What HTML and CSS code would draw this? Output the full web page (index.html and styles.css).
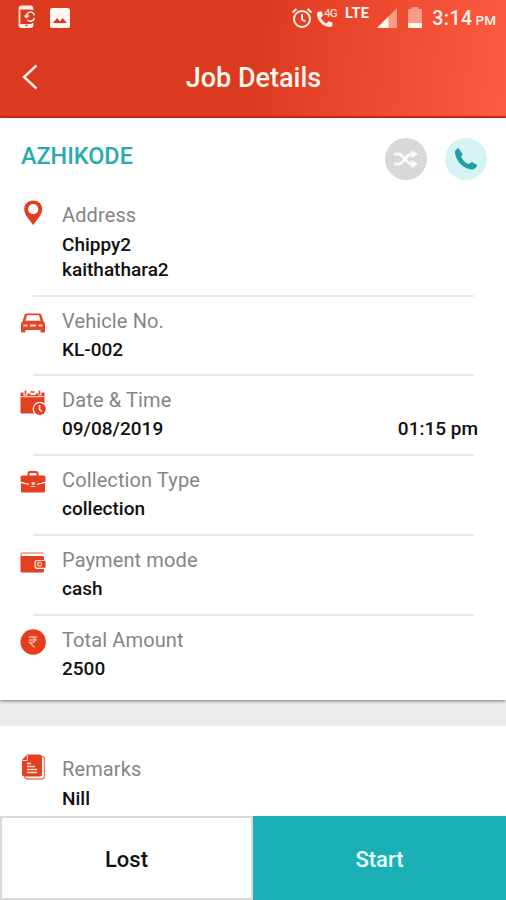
FILE: index.html
```html
<!DOCTYPE html>
<html lang="en">
<head>
<meta charset="utf-8">
<title>Job Details</title>
<link rel="stylesheet" href="styles.css">
</head>
<body>
<div class="screen">
  <header class="header">
    <div class="status">
      <svg class="status-phone" width="18" height="24" viewBox="0 0 18 24"><path d="M14.500 5V3.500Q14.500 1.500 12.500 1.500H3.500Q1.500 1.500 1.500 3.500V20Q1.500 22 3.500 22H12.500Q14.500 22 14.500 20V18" fill="none" stroke="#fff0ea" stroke-width="1.800"/><path d="M2 2h12v2.500H2zM2 19h12v3H2z" fill="#fff0ea"/><path d="M7 20.300h3" stroke="#dc3a1e" stroke-width="1"/><path d="M8.500 11a4 4 0 0 1 7-2.500l1 2M16.500 13a4.200 4.200 0 0 1-7 2M6.500 10.500l2 2 2.500-2" fill="none" stroke="#fff0ea" stroke-width="1.500"/></svg>
      <svg class="status-image" width="20" height="20" viewBox="0 0 20 20"><rect width="20" height="20" rx="2.500" fill="#fff8f3"/><path d="M3 15l4-5 3 3.500 2.500-3.500 4.500 5z" fill="#dc3a1e"/></svg>
      <div class="status-right">
        <svg class="alarm" width="22" height="22" viewBox="0 0 22 22" fill="none" stroke="#fff0ea" stroke-width="2"><circle cx="11" cy="12" r="8"/><path d="M11 7v5.500l3.500 2M1.500 5.500l4-3.500M20.500 5.500l-4-3.500"/></svg>
        <div class="volte"><svg width="18" height="18" viewBox="0 0 18 18"><path d="M3.500 1.500C2 1.500 1 2.300 1 3.500 1 11 7 17 14.500 17c1.200 0 2-.8 2-2v-2.400l-4-1.300-2.300 2.100C7.800 12.200 6 10.200 4.800 8l2.100-2.300L5.900 1.500z" fill="#fff0ea"/></svg><span>4G</span></div>
        <span class="lte">LTE</span>
        <svg class="signal" width="20" height="20" viewBox="0 0 20 20"><path d="M0 20L20 0v20z" fill="#ff9d89"/><path d="M0 20L11.500 8.500V20z" fill="#fff5ed"/></svg>
        <svg class="battery" width="14" height="21" viewBox="0 0 14 21"><path d="M0 3Q0 2 1 2h2.500V0h7v2H13q1 0 1 1v13H0z" fill="#f99a88"/><path d="M0 16h14v4q0 1-1 1H1q-1 0-1-1z" fill="#fff5ed"/></svg>
        <span class="clock">3:14</span><span class="pm">PM</span>
      </div>
    </div>
    <div class="titlebar">
      <svg class="back" width="17" height="26" viewBox="0 0 17 26"><path d="M14.500 1.500L2 13l12.500 11.500" fill="none" stroke="#fff0e8" stroke-width="2.400"/></svg>
      <h1>Job Details</h1>
    </div>
  </header>

  <main class="card">
    <div class="card-head">
      <h2>AZHIKODE</h2>
      <div class="round gray"><svg width="26" height="18" viewBox="0 0 26 18"><path d="M1 4h4c6 0 8 10 14 10h2M1 14h4c6 0 8-10 14-10h2" fill="none" stroke="#fafafa" stroke-width="2.800"/><path d="M18.500-.2l6.500 4.200-6.500 4.200zM18.500 9.800l6.500 4.200-6.500 4.200z" fill="#fafafa"/></svg></div>
      <div class="round aqua"><svg width="24" height="22" viewBox="0 0 24 22"><path d="M4.500 0C2 1 .5 3 1 5.500 2.500 14 10 21 18 21.500c2.500 0 4.500-2 5.200-4.500L18 14l-3.500 2C11.500 15 8.500 12 7.200 9L8.500 6z" fill="#219fa8"/></svg></div>
    </div>

    <section class="row address">
      <svg class="icon" viewBox="0 0 26 26"><path d="M13.200.5C8 .5 4.200 4.300 4.200 9.300c0 5.700 5.800 10.700 9 15.900 3.200-5.200 9-10.200 9-15.900 0-5-3.800-8.800-9-8.800zm0 3.600a5.100 5.100 0 1 1 0 10.200 5.100 5.100 0 0 1 0-10.200z" fill="#e33e1c" fill-rule="evenodd"/></svg>
      <div class="label">Address</div>
      <div class="value">Chippy2<br>kaithathara2</div>
    </section>
    <section class="row">
      <svg class="icon" viewBox="0 0 26 26"><path d="M6.500 3.500h13q1.500 0 2 1.500l2 6.500Q25 12.500 25 14v7.500q0 1-1 1h-2.500q-1 0-1-1V20h-15v1.500q0 1-1 1H2q-1 0-1-1V14q0-1.500 1.500-2.500l2-6.500q.5-1.500 2-1.500zM7 5.300L5.400 10.800h15.200L19 5.300z" fill="#e2472b" fill-rule="evenodd"/><path d="M3.500 15.500h4M10 15.500h6M18.500 15.500h4" stroke="#ffd5cc" stroke-width="2"/></svg>
      <div class="label">Vehicle No.</div>
      <div class="value">KL-002</div>
    </section>
    <section class="row date">
      <svg class="icon" viewBox="0 0 26 26"><path d="M.5 2.500h3v3h4v-2h3v1.500h5V3.500h3v2h3v-3h3V12H.5zM.5 8h24v14q0 1.500-1.500 1.500H2Q.5 23.500.5 22z" fill="#e33f21"/><path d="M5.500.5v4M10.500 2h4M19.500.5v4" stroke="#e33f21" stroke-width="1.700"/><path d="M1 6.700h23" stroke="#ffe7df"/><circle cx="19.800" cy="19" r="7.200" fill="#fff"/><circle cx="19.800" cy="19" r="6" fill="#e33f21"/><path d="M19.500 15v4.500l2.500 2" fill="none" stroke="#ffe7df" stroke-width="1.600"/></svg>
      <div class="label">Date &amp; Time</div>
      <div class="value split"><span>09/08/2019</span><span>01:15 pm</span></div>
    </section>
    <section class="row">
      <svg class="icon" viewBox="0 0 26 26"><path d="M8.500 7V4.500q0-1.500 1.500-1.500h6q1.500 0 1.500 1.500V7" fill="none" stroke="#e33f21" stroke-width="2"/><path d="M2.500 6.500h21q2 0 2 2v4q-5 2-9 2.300V13h-7v1.800q-4-.3-9-2.300v-4q0-2 2-2zM1 14q5 1.700 8.500 1.900.5 1.800 2 1.800h3q1.500 0 2-1.800 3.500-.2 8.500-1.900v8.300q0 1.200-1.200 1.200H2.200Q1 23.500 1 22.300z" fill="#e33f21"/><rect x="9" y="12" width="8" height="5" fill="#e33f21"/><rect x="11.500" y="13.300" width="3.500" height="2.400" rx="1" fill="#ffe0d8"/></svg>
      <div class="label">Collection Type</div>
      <div class="value">collection</div>
    </section>
    <section class="row">
      <svg class="icon" viewBox="0 0 26 26"><path d="M23 5.500V4H3Q1 4 1 6" fill="none" stroke="#ee9a85" stroke-width="1.500"/><path d="M.5 5.500Q1 7 3 7h19.500q1.500 0 1.500 1.500V11h-7q-2.500 0-2.500 2.500v4q0 2.500 2.500 2.500h7v2q0 1.500-1.500 1.500H2q-1.500 0-1.500-1.500z" fill="#e33f21"/><path d="M17.500 11.800h8v6.900h-8q-2 0-2-2v-2.900q0-2 2-2z" fill="#e33f21"/><circle cx="19.500" cy="15.200" r="2.600" fill="#f8bfb0"/><circle cx="19.800" cy="15.200" r="1.200" fill="#e33f21"/></svg>
      <div class="label">Payment mode</div>
      <div class="value">cash</div>
    </section>
    <section class="row last">
      <svg class="icon" viewBox="0 0 26 26"><circle cx="13.200" cy="13" r="12.700" fill="#e33d1d"/><path d="M9 8h8M9 11h8M9 8h3q3 0 3 2.800T12 13.500H9.500l5 4.800" fill="none" stroke="#f8b6a0" stroke-width="1.400"/></svg>
      <div class="label">Total Amount</div>
      <div class="value">2500</div>
    </section>
  </main>

  <div class="card remarks">
    <section class="row last">
      <svg class="icon" viewBox="0 0 26 26"><path d="M22 2.500q2.500 0 2.500 3V22q0 3-3 3H8q-3 0-3.500-2.500" fill="none" stroke="#ea7a62" stroke-width="1.300"/><path d="M7 .5h12.500q2.500 0 2.500 2.500v17q0 2.500-2.500 2.500H4.500Q2 22.500 2 20V6z" fill="#e33f21"/><path d="M2.500 6.500h4.800V1" fill="none" stroke="#ffd9ce"/><path d="M7 9.500h4M7 12.500h8M7 15.500h10M7 18.500h10" stroke="#ffd9ce" stroke-width="1.300"/></svg>
      <div class="label">Remarks</div>
      <div class="value">Nill</div>
    </section>
  </div>

  <footer class="actions">
    <button class="lost">Lost</button>
    <button class="start">Start</button>
  </footer>
</div>
</body>
</html>
```
FILE: styles.css
```css
* { box-sizing: border-box; }
body { margin: 0; font-family: Roboto, "Liberation Sans", sans-serif; background: #ebebeb; }
.screen { width: 506px; height: 900px; display: flex; flex-direction: column; overflow: hidden; }
svg { display: block; flex: none; }
h1, h2 { margin: 0; font-weight: 500; }

.header { height: 118px; flex: none; background: linear-gradient(97deg, #dc3a1e 50%, #f04c32 78%, #fe5b42 100%); border-bottom: 2px solid #d32c10; color: #fff5ef; }
.status { height: 38px; display: flex; align-items: flex-start; padding-left: 18px; }
.status-phone { margin-top: 5px; }
.status-image { margin: 8px 0 0 14px; }
.status-right { display: flex; align-items: flex-start; margin-left: auto; padding-right: 10px; }
.alarm { margin-top: 7px; }
.volte { display: flex; margin: 10px 0 0 3px; width: 22px; }
.volte span { font-size: 11.5px; font-weight: 500; line-height: 12px; margin: -3px 0 0 -10px; letter-spacing: -0.6px; color: #ffd9cd; }
.lte { font-size: 14.5px; font-weight: 700; line-height: 16px; margin: 6px 0 0 7px; letter-spacing: 0.3px; }
.signal { margin: 8px 0 0 8px; }
.battery { margin: 7px 0 0 11px; }
.clock { font-size: 19.5px; font-weight: 500; line-height: 24px; margin: 7px 0 0 10px; letter-spacing: 0.5px; }
.pm { font-size: 13.5px; font-weight: 500; line-height: 16px; margin: 12px 0 0 3px; }
.titlebar { height: 78px; display: grid; grid-template-columns: 60px 1fr 60px; align-items: center; }
.back { margin-left: 22px; }
h1 { text-align: center; font-size: 27px; line-height: 32px; padding: 2px 0 0 1px; }

.card { background: #fff; flex: none; }
main.card { height: 582px; box-shadow: 0 1px 3px rgba(0, 0, 0, 0.5); }
.card-head { height: 72px; padding: 20px 19px 0 21px; display: flex; align-items: flex-start; }
h2 { font-size: 23.4px; line-height: 28px; margin: 4px auto 0 0; color: #28abb0; }
.round { width: 42px; height: 42px; border-radius: 50%; display: flex; align-items: center; justify-content: center; }
.gray { background: #d8d8d8; }
.aqua { background: #d6f2f2; margin-left: 18px; }

.row { height: 79.75px; display: grid; grid-template-columns: 42px 1fr; grid-template-rows: 24px auto 1fr; row-gap: 4px; padding: 12px 28px 0 20px; }
.row::after { content: ""; grid-column: 1 / -1; align-self: end; height: 2px; margin: 0 4px 0 13px; background: #e9e9e9; }
.row.address { height: 106.5px; padding-top: 13px; row-gap: 5px; }
.row.last::after { background: none; }
.icon { width: 26px; height: 26px; grid-row: 1 / 3; margin-top: 1px; }
.date .icon { margin-top: 2px; }
.address .icon, .remarks .icon { margin-top: -3px; }
.label { grid-column: 2; font-size: 20px; line-height: 24px; color: #858585; letter-spacing: 0.12px; }
.value { grid-column: 2; font-size: 19px; font-weight: 500; line-height: 25px; color: #111; }
.split { display: flex; justify-content: space-between; }
.remarks { margin-top: 26px; padding-top: 19px; height: 90px; }
.remarks .row { row-gap: 5px; }

.actions { height: 84px; flex: none; display: grid; grid-template-columns: 253px 253px; }
.actions button { font: 500 22px Roboto, "Liberation Sans", sans-serif; padding: 2px 0 0; border: 0; }
.actions .lost { background: #fff; color: #111; border: 2px solid #dadada; }
.actions .start { background: #1bb0b6; color: #e6ffff; }
```
